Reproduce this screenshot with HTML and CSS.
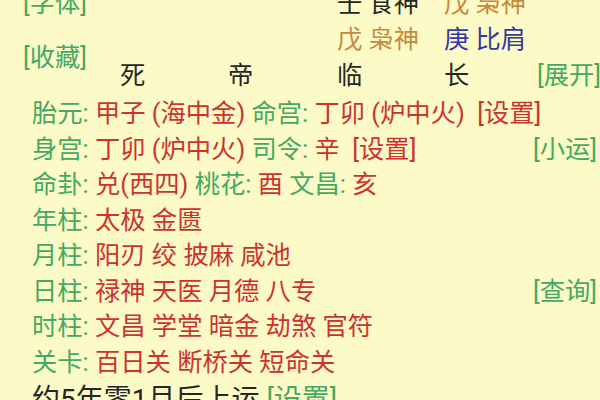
FILE: index.html
```html
<!DOCTYPE html>
<html lang="zh-CN">
<head>
<meta charset="utf-8">
<link rel="stylesheet" href="styles.css">
</head>
<body>
<div class="page">
  <div class="head">
    <span class="btn c0 r1">[字体]</span>
    <span class="btn c0 r23">[收藏]</span>
    <span class="cell c3 r1 dark">壬 食神</span>
    <span class="cell c4 r1 orange">戊 枭神</span>
    <span class="cell c3 r2 orange">戊 枭神</span>
    <span class="cell c4 r2 blue">庚 比肩</span>
    <span class="cell c1 r3 dark">死</span>
    <span class="cell c2 r3 dark">帝</span>
    <span class="cell c3 r3 dark">临</span>
    <span class="cell c4 r3 dark">长</span>
    <span class="btn c5 r3">[展开]</span>
  </div>
  <div class="list">
    <div class="row"><span><span class="g">胎元: </span><span class="r">甲子 (海中金) </span><span class="g">命宫: </span><span class="r">丁卯 (炉中火)&nbsp; [设置]</span></span></div>
    <div class="row"><span><span class="g">身宫: </span><span class="r">丁卯 (炉中火) </span><span class="g">司令: </span><span class="r">辛&nbsp; [设置]</span></span><span class="btn">[小运]</span></div>
    <div class="row"><span><span class="g">命卦: </span><span class="r">兑(西四) </span><span class="g">桃花: </span><span class="r">酉 </span><span class="g">文昌: </span><span class="r">亥</span></span></div>
    <div class="row"><span><span class="g">年柱: </span><span class="r">太极 金匮</span></span></div>
    <div class="row"><span><span class="g">月柱: </span><span class="r">阳刃 绞 披麻 咸池</span></span></div>
    <div class="row"><span><span class="g">日柱: </span><span class="r">禄神 天医 月德 八专</span></span><span class="btn">[查询]</span></div>
    <div class="row"><span><span class="g">时柱: </span><span class="r">文昌 学堂 暗金 劫煞 官符</span></span></div>
    <div class="row"><span><span class="g">关卡: </span><span class="r">百日关 断桥关 短命关</span></span></div>
    <div class="row last"><span><span class="dark">约5年零1月后上运 </span><span class="g">[设置]</span></span></div>
  </div>
</div>
</body>
</html>
```
FILE: styles.css
```css
html {
  overflow: hidden;
  background: #fcfac6;
}
body {
  margin: 0;
  padding: 0;
}
.page {
  width: 600px;
  padding-top: 1px;
  font-family: Roboto, "Noto Sans CJK SC", sans-serif;
  font-size: 25.3px;
  line-height: 36px;
}
.head {
  margin-top: -16px;
  display: grid;
  grid-template-columns: 120px 108px 109px 107px 93px 1fr;
  grid-template-rows: 37px 36px 36px;
}
.head .cell, .head .btn {
  white-space: nowrap;
  align-self: center;
}
.c0 { grid-column: 1; padding-left: 23px; }
.c1 { grid-column: 2; }
.c2 { grid-column: 3; }
.c3 { grid-column: 4; }
.c4 { grid-column: 5; }
.c5 { grid-column: 6; }
.r1 { grid-row: 1; }
.r2 { grid-row: 2; }
.r3 { grid-row: 3; }
.r23 { grid-row: 2 / 4; }
.list {
  margin-top: 2px;
  padding-left: 32px;
  padding-right: 3px;
}
.row {
  display: flex;
  justify-content: space-between;
  height: 35.5px;
  line-height: 35.5px;
  white-space: pre;
}
.row.last {
  margin-top: 5px;
  font-size: 28px;
  line-height: 30px;
  height: 30px;
}
.dark { color: #262626; }
.orange { color: #c8893c; }
.blue { color: #3838a0; }
.g { color: #45a865; }
.r { color: #cc3330; }
.btn { color: #45a865; }
```
